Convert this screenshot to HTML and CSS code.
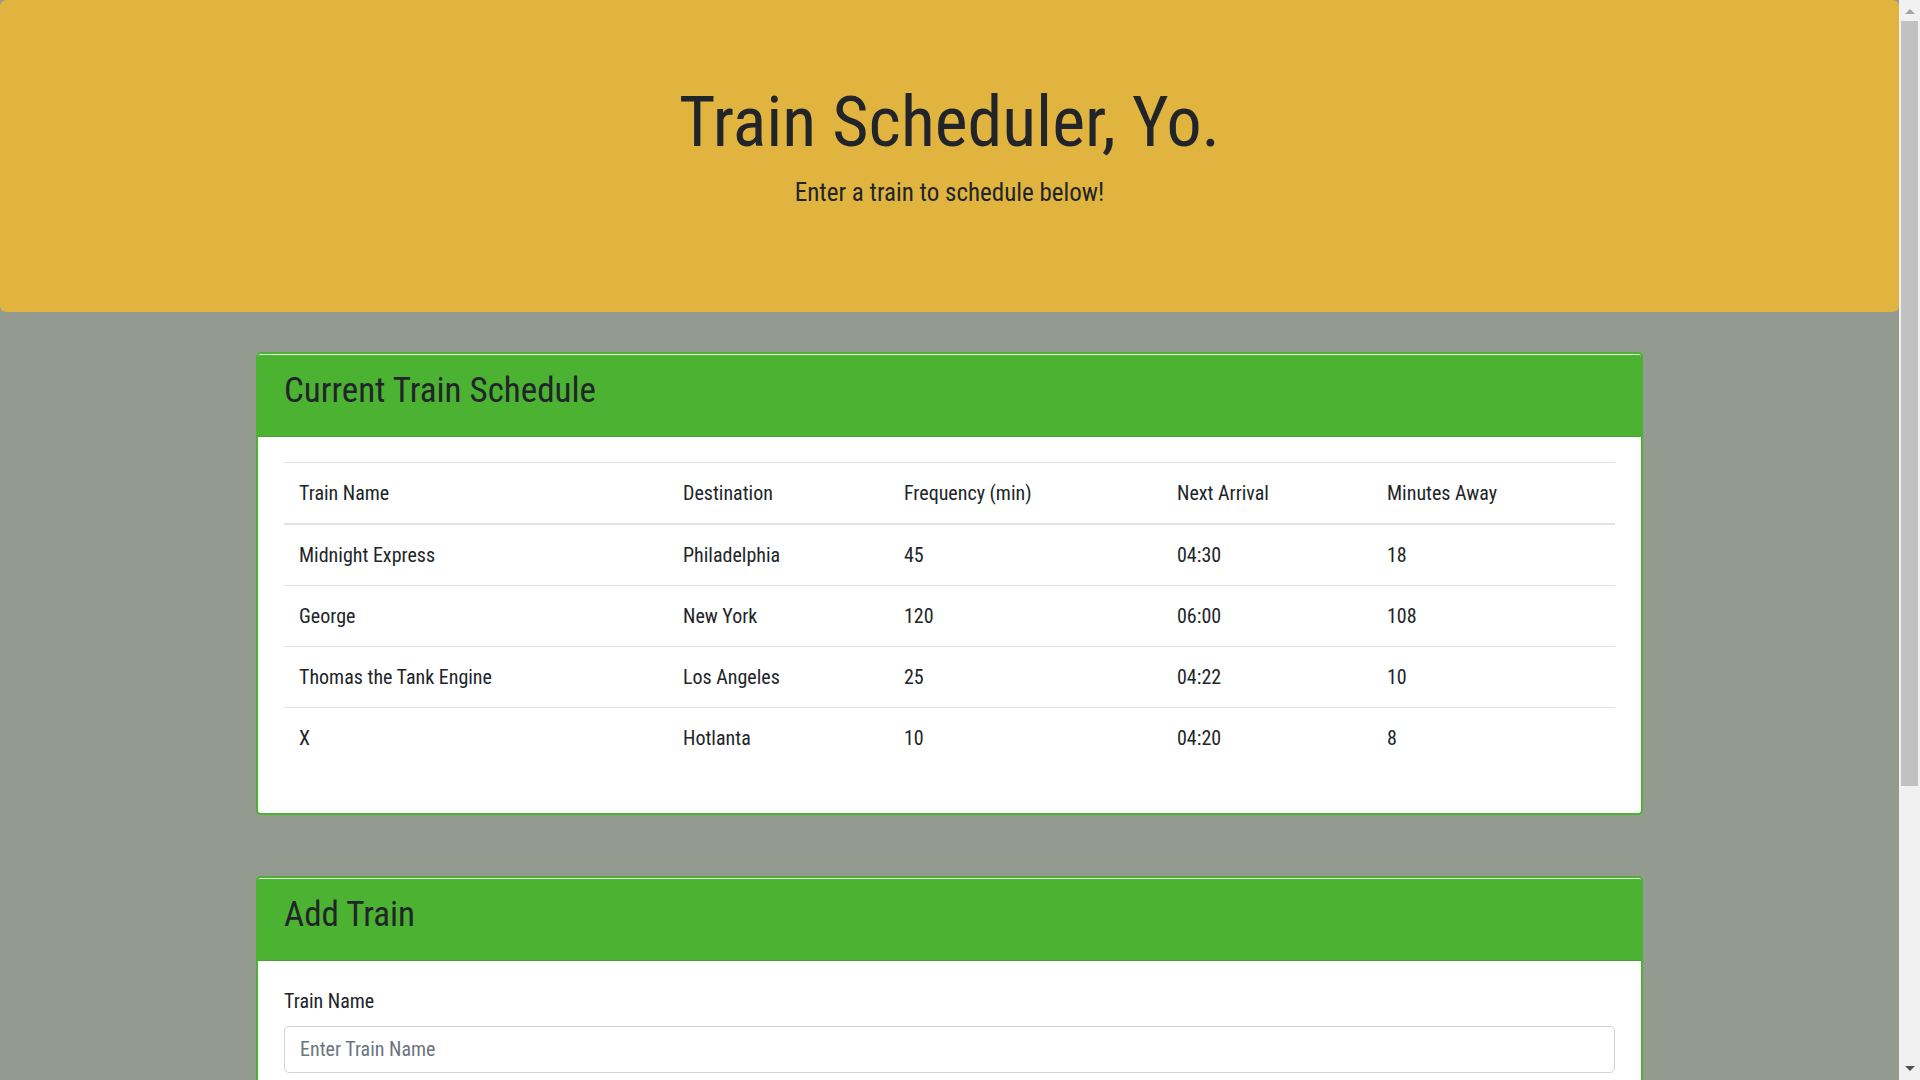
FILE: index.html
```html
<!DOCTYPE html>
<html lang="en">
<head>
<meta charset="utf-8">
<title>Train Scheduler</title>
<link rel="stylesheet" href="styles.css">
</head>
<body>
<div class="jumbotron">
  <h1 class="display">Train Scheduler, Yo.</h1>
  <p class="lead">Enter a train to schedule below!</p>
</div>
<div class="container">
  <div class="card">
    <div class="card-header"><h3>Current Train Schedule</h3></div>
    <div class="card-body">
      <table class="table">
        <thead>
          <tr><th class="c1">Train Name</th><th class="c2">Destination</th><th class="c3">Frequency (min)</th><th class="c4">Next Arrival</th><th class="c5">Minutes Away</th></tr>
        </thead>
        <tbody>
          <tr><td>Midnight Express</td><td>Philadelphia</td><td>45</td><td>04:30</td><td>18</td></tr>
          <tr><td>George</td><td>New York</td><td>120</td><td>06:00</td><td>108</td></tr>
          <tr><td>Thomas the Tank Engine</td><td>Los Angeles</td><td>25</td><td>04:22</td><td>10</td></tr>
          <tr><td>X</td><td>Hotlanta</td><td>10</td><td>04:20</td><td>8</td></tr>
        </tbody>
      </table>
    </div>
  </div>
  <div class="card card-add">
    <div class="card-header"><h3>Add Train</h3></div>
    <div class="card-body">
      <form class="form">
        <div class="form-group">
          <label class="label" for="train-name">Train Name</label>
          <input class="input" id="train-name" type="text" placeholder="Enter Train Name">
        </div>
        <div class="form-group">
          <label class="label" for="dest">Destination</label>
          <input class="input" id="dest" type="text" placeholder="Enter Destination">
        </div>
        <div class="form-group">
          <label class="label" for="first">First Train Time (HH:mm - military time)</label>
          <input class="input" id="first" type="text" placeholder="HH:mm">
        </div>
        <div class="form-group">
          <label class="label" for="freq">Frequency (min)</label>
          <input class="input" id="freq" type="text" placeholder="Enter Frequency">
        </div>
        <button class="btn" type="button">Submit</button>
      </form>
    </div>
  </div>
</div>
<div class="scrollbar" aria-hidden="true">
  <div class="sb-up"></div>
  <div class="sb-thumb"></div>
  <div class="sb-down"></div>
</div>
</body>
</html>
```
FILE: styles.css
```css
html, body {
  margin: 0;
  padding: 0;
}
body {
  background: #939a8f;
  color: #212529;
  font-family: Roboto, "Liberation Sans", sans-serif;
  font-stretch: condensed;
  font-size: 20px;
  line-height: 1.5;
  padding-right: 21px;
}
.jumbotron {
  background: #e0b43e;
  border-radius: 6px;
  padding: 80px 40px;
  margin-bottom: 40px;
  text-align: center;
}
.display {
  font-size: 70px;
  font-weight: 400;
  line-height: 1.2;
  margin: 0 0 10px;
}
.lead {
  font-size: 25px;
  font-weight: 400;
  margin: 0 0 20px;
}
.container {
  width: 1387px;
  margin: 0 auto;
}
.card {
  background: #fff;
  border: 2px solid #4cb232;
  border-radius: 5px;
  overflow: hidden;
}
.card-add {
  margin-top: 61px;
}
.card-header {
  background: #4cb232;
  padding: 15px 26px 14px;
  border-top: 1px solid #e8f5e4;
  border-bottom: 1px solid #46a02f;
}
.card-header h3 {
  font-size: 35px;
  font-weight: 400;
  line-height: 1.2;
  margin: 0 0 10px;
}
.card-body {
  padding: 25px 26px;
}
.table {
  width: 100%;
  border-collapse: collapse;
  table-layout: fixed;
  margin-bottom: 20px;
}
.table th, .table td {
  box-sizing: border-box;
  padding: 15px;
  border-top: 1px solid #dee2e6;
  text-align: left;
  font-weight: 400;
  vertical-align: top;
  white-space: nowrap;
}
.table thead th {
  border-bottom: 2px solid #dee2e6;
}
.c1 { width: 384px; }
.c2 { width: 221px; }
.c3 { width: 273px; }
.c4 { width: 210px; }
.form-group {
  margin-bottom: 20px;
}
.label {
  display: block;
  margin-bottom: 10px;
}
.input {
  display: block;
  box-sizing: border-box;
  width: 100%;
  height: 47px;
  padding: 7px 15px;
  font: inherit;
  color: #495057;
  background: #fff;
  border: 1px solid #ced4da;
  border-radius: 5px;
}
.input::placeholder {
  color: #6c757d;
}
.btn {
  font: inherit;
  padding: 7px 15px;
  border-radius: 5px;
  border: 1px solid #4cb232;
  background: #4cb232;
  color: #fff;
}
.scrollbar {
  position: fixed;
  top: 0;
  right: 0;
  width: 21px;
  height: 100vh;
  background: #f1f1f1;
}
.sb-up {
  position: absolute;
  left: 6px;
  top: 9px;
  width: 0;
  height: 0;
  border-left: 5px solid transparent;
  border-right: 5px solid transparent;
  border-bottom: 5px solid #a3a3a3;
}
.sb-thumb {
  position: absolute;
  left: 2px;
  top: 21px;
  width: 17px;
  height: 765px;
  background: #c1c1c1;
}
.sb-down {
  position: absolute;
  left: 6px;
  bottom: 9px;
  width: 0;
  height: 0;
  border-left: 5px solid transparent;
  border-right: 5px solid transparent;
  border-top: 5px solid #505050;
}
```
